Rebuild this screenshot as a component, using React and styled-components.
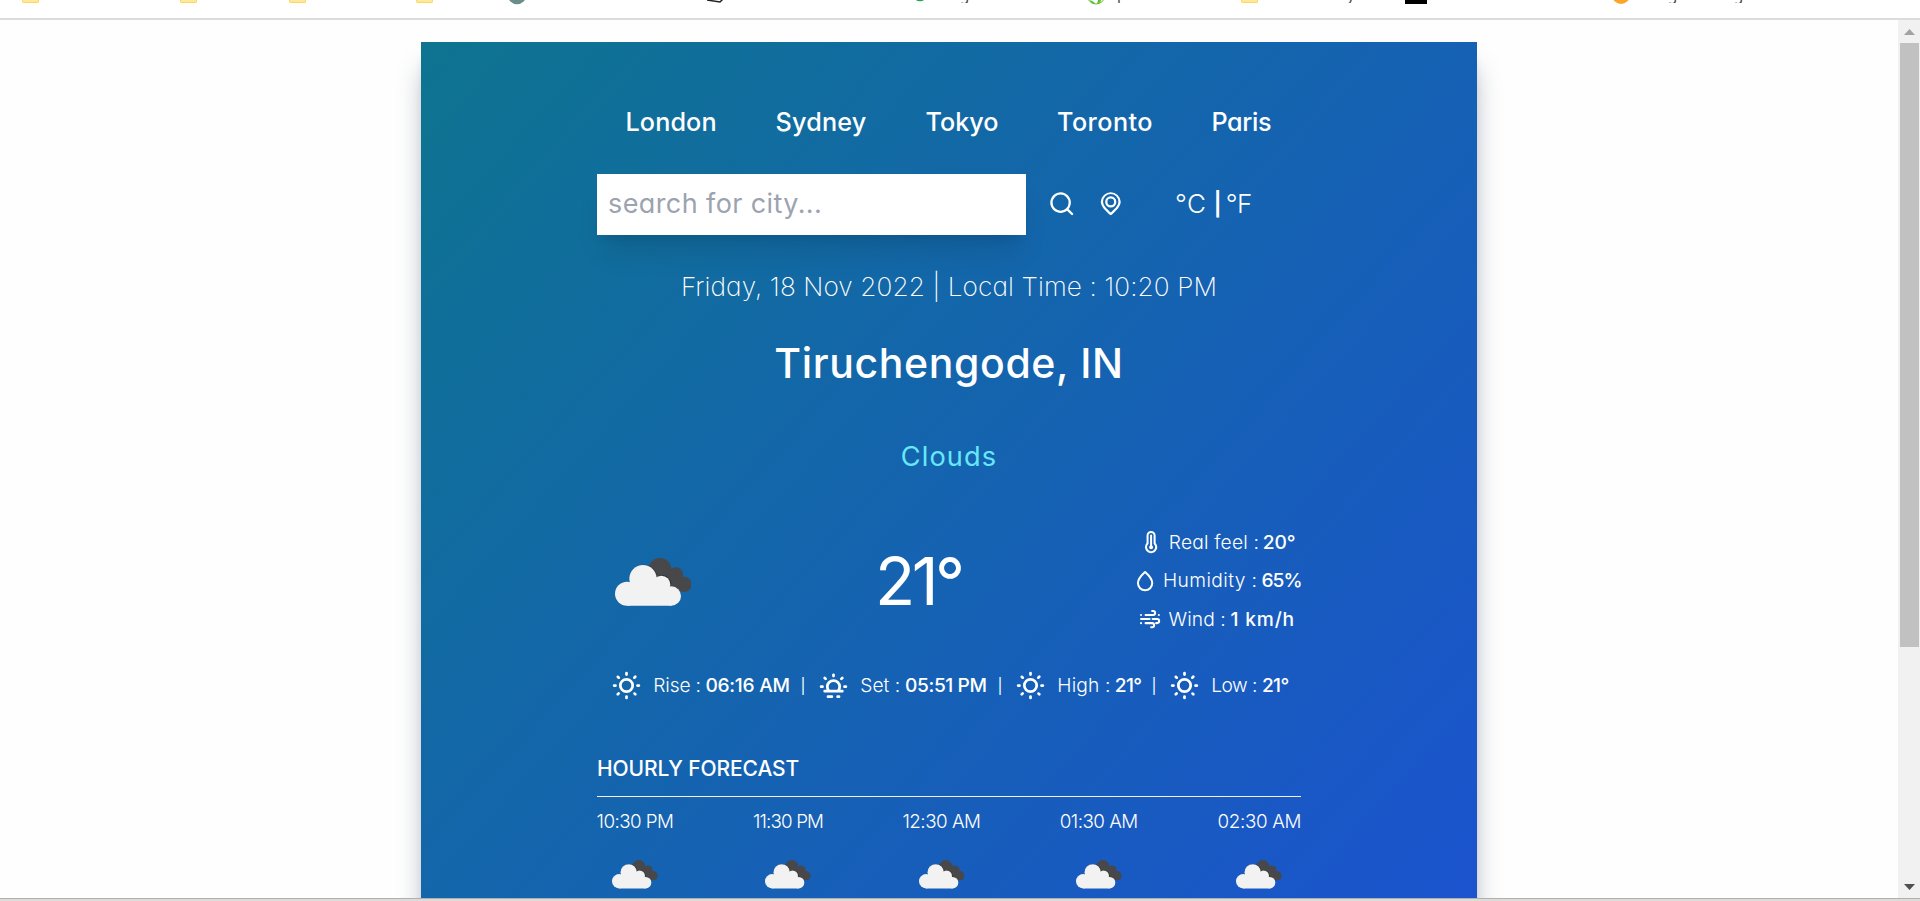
import React from 'react';
import styled, { createGlobalStyle } from 'styled-components';

const GlobalStyle = createGlobalStyle`
  *, *::before, *::after { box-sizing: border-box; }
  body {
    margin: 0;
    background: #fefefe;
    color: #fff;
    font-family: Inter, 'Open Sans', sans-serif;
    font-feature-settings: 'cv11';
    overflow: hidden;
  }
`;

const Window = styled.div`
  display: flex;
  flex-direction: column;
  height: 901px;
  overflow: hidden;
`;

/* ---- browser chrome ---- */

const BookmarksBar = styled.div`
  display: flex;
  align-items: flex-start;
  flex: none;
  height: 20px;
  border-bottom: 2px solid #dcdcdc;
  background: #fff;
`;

const Folder = styled.span`
  width: 17px;
  height: 3px;
  margin-left: ${(p) => p.$gap}px;
  background: #ffe89a;
  border: 1px solid #fbd75f;
  border-top: 0;
  border-radius: 0 0 2px 2px;
`;

const Favicon = styled.svg`
  display: block;
  flex: none;
  width: ${(p) => p.$w}px;
  height: 5px;
  margin-left: ${(p) => p.$gap}px;
`;

const Descender = styled.span`
  height: 3px;
  width: 9px;
  margin-left: ${(p) => p.$gap}px;
  overflow: hidden;
  color: #444;
  font: 15px/18px 'Noto Sans', sans-serif;
  display: flex;
  align-items: flex-end;
`;

const Viewport = styled.div`
  display: flex;
  flex: none;
  height: 878px;
  overflow: hidden;
`;

const Page = styled.main`
  flex: 1;
  padding: 22px 421px 0;
  overflow: hidden;
`;

const Scrollbar = styled.div`
  display: flex;
  flex-direction: column;
  align-items: center;
  width: 22px;
  padding: 9px 0 8px;
  background: #f1f1f1;
`;

const Arrow = styled.svg`
  display: block;
  flex: none;
  width: 11px;
  height: 6px;
`;

const Thumb = styled.div`
  width: 19px;
  height: 604px;
  margin: 8px 0 auto;
  background: #c1c1c1;
`;

const BottomEdge = styled.div`
  flex: none;
  height: 3px;
  border-top: 1px solid #b0b0b0;
  background: #dcdbda;
`;

/* ---- weather card ---- */

const Card = styled.section`
  width: 1056px;
  height: 1171px;
  padding: 50px 176px 22px;
  background: linear-gradient(to bottom right, #0e7490, #1d4ed8);
  box-shadow: 0 22px 27.5px -5.5px #9ca3af, 0 8.8px 11px -6.6px #9ca3af;
`;

const Text = styled.span`
  font-size: ${(p) => p.$size}px;
  font-weight: ${(p) => p.$weight || 400};
  letter-spacing: ${(p) => p.$track || 0}px;
  color: ${(p) => p.$color || 'inherit'};
  line-height: 1;
  white-space: pre;
`;

const Cities = styled.nav`
  display: grid;
  grid-template-columns: 150px 150px 131.5px 154.5px 1fr;
  align-items: center;
  height: 61px;
  padding-left: 28.5px;
`;

const SearchRow = styled.div`
  display: flex;
  align-items: center;
  height: 61px;
  margin-top: 21px;
`;

const SearchBox = styled.div`
  display: flex;
  align-items: center;
  width: 429px;
  height: 61px;
  padding: 0 0 2px 11px;
  background: #fff;
  box-shadow: 0 22px 27.5px -5.5px rgba(0, 0, 0, 0.1), 0 8.8px 11px -6.6px rgba(0, 0, 0, 0.1);
`;

const Tools = styled.div`
  display: flex;
  gap: 22px;
  margin: 0 0 1px 21.7px;
`;

const Units = styled.div`
  display: grid;
  grid-template-columns: 38.5px 12.2px auto;
  align-items: center;
  margin: 0 0 1px 50.3px;
`;

const Line = styled.div`
  display: flex;
  align-items: center;
  justify-content: center;
  height: ${(p) => p.$h}px;
  margin-top: ${(p) => p.$mt}px;
`;

const Current = styled.div`
  display: grid;
  grid-template-columns: 278px 257px 1fr;
  align-items: center;
  height: 115.5px;
  margin-top: 50px;
`;

const CloudSvg = styled.svg`
  display: block;
  width: ${(p) => p.$w}px;
  height: auto;
  margin: ${(p) => p.$margin || 0};
`;

const Details = styled.div`
  display: flex;
  flex-direction: column;
`;

const DetailRow = styled.div`
  display: grid;
  grid-template-columns: 30.2px ${(p) => p.$label}px auto;
  align-items: center;
  height: 38.5px;
  padding-left: ${(p) => p.$indent}px;
`;

const SunRow = styled.div`
  display: grid;
  grid-template-columns: 207px 197px 154px 1fr;
  height: 44px;
  margin-top: 25px;
  padding-left: 13px;
`;

const SunItem = styled.div`
  display: grid;
  grid-template-columns: 43.3px ${(p) => p.$label}px 1fr auto;
  align-items: center;
`;

const Divider = styled(Text)`
  margin-right: 11.5px;
`;

const SectionTitle = styled.header`
  display: flex;
  align-items: flex-start;
  height: 45px;
  margin-top: 44.5px;
  padding-top: 6px;
  border-bottom: 1px solid #f3f1ea;
`;

const Hours = styled.div`
  display: flex;
  justify-content: space-between;
`;

const Hour = styled.div`
  display: flex;
  flex-direction: column;
  align-items: center;
  width: ${(p) => p.$w}px;
  padding-top: 16px;
`;

const Icon = styled.svg`
  display: block;
  flex: none;
  width: ${(p) => p.$s}px;
  height: ${(p) => p.$s}px;
  fill: currentColor;
`;

const stroke = { fill: 'none', stroke: 'currentColor', strokeWidth: 2, strokeLinecap: 'round', strokeLinejoin: 'round' };

const SearchIcon = () => (
  <Icon $s={27.5} viewBox="0 0 24 24">
    <path d="M21.71,20.29,18,16.61A9,9,0,1,0,16.61,18l3.68,3.68a1,1,0,0,0,1.42,0A1,1,0,0,0,21.71,20.29ZM11,18a7,7,0,1,1,7-7A7,7,0,0,1,11,18Z" />
  </Icon>
);

const PinIcon = () => (
  <Icon $s={27.5} viewBox="0 0 24 24">
    <path d="M12,2A9,9,0,0,0,3.3,10.2c0,5.2,7.7,11,8,11.5a1,1,0,0,0,1.4,0c.3-.5,8-6.3,8-11.5A9,9,0,0,0,12,2Zm0,17.6c-1.9-1.8-6.7-5.7-6.7-9.4a6.7,6.7,0,0,1,13.4,0C18.700,13.900,13.900,17.800,12,19.600ZM12,5.500a4.900,4.900,0,1,0,4.900,4.900A4.900,4.900,0,0,0,12,5.500Zm0,7.800a2.900,2.900,0,1,1,2.900-2.900A2.900,2.900,0,0,1,12,13.300Z" />
  </Icon>
);

const ThermometerIcon = () => (
  <Icon $s={24.2} viewBox="0 0 24 24">
    <path d="M13,15.28V5.500a1,1,0,0,0-2,0v9.780A2,2,0,0,0,10,17a2,2,0,0,0,4,0A2,2,0,0,0,13,15.280ZM16.500,13V5.500a4.500,4.500,0,0,0-9,0V13a6,6,0,0,0,3.210,9.830A7,7,0,0,0,12,23,6,6,0,0,0,16.500,13Zm-2,7.070a4,4,0,0,1-6.420-2.200,4,4,0,0,1,1.100-3.760,1,1,0,0,0,.3-.71V5.500a2.500,2.500,0,0,1,5,0v7.940a1,1,0,0,0,.3.710,4,4,0,0,1-.28,6Z" />
  </Icon>
);

const DropIcon = () => (
  <Icon $s={24.2} viewBox="0 0 24 24">
    <path {...stroke} d="M12 3C9.500 5.300 4.900 9.300 4.900 14a7.100 7.100 0 0 0 14.200 0C19.100 9.300 14.500 5.300 12 3Z" />
  </Icon>
);

const WindIcon = () => (
  <Icon $s={24.2} viewBox="0 0 24 24">
    <path {...stroke} d="M7.500 8h7.500a2 2 0 0 0 0-4h-1M3 12h8.500M14.500 12h4.500a2 2 0 0 1 0 4h-1M7.500 16h6.500a2 2 0 0 1 0 4h-1M3 8h.01M3 16h.01M20.700 8h.01" />
  </Icon>
);

const SunIcon = () => (
  <Icon $s={33} viewBox="0 0 24 24">
    <path d="M5.64,17l-.71.71a1,1,0,0,0,0,1.41,1,1,0,0,0,1.41,0l.71-.71A1,1,0,0,0,5.64,17ZM5,12a1,1,0,0,0-1-1H3a1,1,0,0,0,0,2H4A1,1,0,0,0,5,12Zm7-7a1,1,0,0,0,1-1V3a1,1,0,0,0-2,0V4A1,1,0,0,0,12,5ZM5.64,7.05a1,1,0,0,0,.7.29,1,1,0,0,0,.71-.29,1,1,0,0,0,0-1.41l-.71-.71A1,1,0,0,0,4.93,6.340Zm12,.29a1,1,0,0,0,.7-.29l.71-.71a1,1,0,1,0-1.410-1.410L17,5.640a1,1,0,0,0,0,1.410A1,1,0,0,0,17.660,7.340ZM21,11H20a1,1,0,0,0,0,2h1a1,1,0,0,0,0-2Zm-9,8a1,1,0,0,0-1,1v1a1,1,0,0,0,2,0V20A1,1,0,0,0,12,19ZM18.360,17A1,1,0,0,0,17,18.360l.71.71a1,1,0,0,0,1.410,0,1,1,0,0,0,0-1.410ZM12,6.500A5.500,5.500,0,1,0,17.500,12,5.510,5.510,0,0,0,12,6.500Zm0,9A3.500,3.500,0,1,1,15.500,12,3.500,3.500,0,0,1,12,15.500Z" />
  </Icon>
);

const SunsetIcon = () => (
  <Icon $s={33} viewBox="0 0 24 24">
    <path {...stroke} d="M5.600 16.100h12.800M8.600 15.900A4.500 4.500 0 1 1 15.400 15.900M12 4.200v.9M3 12.900h1M20 12.900h1M5.600 6.500l.7.7M18.400 6.500l-.7.7M8 20.100h2.800M15 20.100h1" />
  </Icon>
);

const Cloud = ({ width, margin }) => (
  <CloudSvg $w={width} $margin={margin} viewBox="0 0 230 145">
    <g fill="#48484a">
      <circle cx="135" cy="34" r="34" />
      <circle cx="182" cy="50" r="22" />
      <circle cx="207" cy="79" r="23" />
      <path d="M120 40L180 40L200 100L150 100Z" />
    </g>
    <g fill="#222" opacity="0.55">
      <circle cx="86" cy="61" r="41" />
      <circle cx="142" cy="78" r="27" />
    </g>
    <g fill="#f2f2f2">
      <circle cx="36" cy="107" r="36" />
      <circle cx="84" cy="62" r="41" />
      <circle cx="139" cy="80" r="27" />
      <circle cx="169" cy="114" r="29" />
      <path d="M36 143V85L70 70H145L169 90V143Z" />
    </g>
  </CloudSvg>
);

const cities = [
  ['London', 0.1],
  ['Sydney', 0.2],
  ['Tokyo', 0],
  ['Toronto', 0.45],
  ['Paris', -0.4],
];

const details = [
  { Glyph: ThermometerIcon, indent: 6.6, w: 94, label: 'Real feel :', lt: 0.2, value: '20°', vt: -0.1 },
  { Glyph: DropIcon, indent: 0.8, w: 98.4, label: 'Humidity :', lt: 0.4, value: '65%', vt: -0.95 },
  { Glyph: WindIcon, indent: 6.4, w: 62, label: 'Wind :', lt: 0.1, value: '1 km/h', vt: 0.8 },
];

const sun = [
  { Glyph: SunIcon, w: 52.2, label: 'Rise :', lt: -0.15, value: '06:16 AM', vt: -0.3 },
  { Glyph: SunsetIcon, w: 44.8, label: 'Set :', lt: 0, value: '05:51 PM', vt: -0.42 },
  { Glyph: SunIcon, w: 57.4, label: 'High :', lt: 0.15, value: '21°', vt: -0.6 },
  { Glyph: SunIcon, w: 50.6, label: 'Low :', lt: -0.55, value: '21°', vt: -0.6 },
];

const hours = [
  ['10:30 PM', 76, -0.55],
  ['11:30 PM', 69, -0.88],
  ['12:30 AM', 76.6, -0.49],
  ['01:30 AM', 76.6, -0.52],
  ['02:30 AM', 83.4, -0.33],
];

const Bookmarks = () => (
  <BookmarksBar>
    <Folder $gap={22} />
    <Folder $gap={141} />
    <Folder $gap={92} />
    <Folder $gap={110} />
    <Favicon $gap={75} $w={18} viewBox="0 0 18 5"><circle cx="9" cy="-5" r="9.300" fill="#6b8e8a" /></Favicon>
    <Favicon $gap={181} $w={18} viewBox="0 0 18 5"><path d="M0 0L13 2L17 -2" fill="none" stroke="#222" strokeWidth="1.500" /></Favicon>
    <Favicon $gap={189} $w={12} viewBox="0 0 12 5"><circle cx="6" cy="-6" r="7.300" fill="#1fa34a" /></Favicon>
    <Descender $gap={34}>g</Descender>
    <Favicon $gap={118} $w={18} viewBox="0 0 18 5"><circle cx="9" cy="-5" r="9" fill="#fff" stroke="#5cc22d" /><path d="M3 0Q8 2 8 4Q3 3 3 0ZM11 0H14Q14 3 10 4Z" fill="#5cc22d" /></Favicon>
    <Descender $gap={12}>p</Descender>
    <Folder $gap={115} />
    <Descender $gap={89}>y</Descender>
    <Favicon $gap={49} $w={22} viewBox="0 0 22 5"><path d="M0 0H22V4H0Z" /></Favicon>
    <Favicon $gap={185} $w={18} viewBox="0 0 18 5"><circle cx="9" cy="-5" r="9" fill="#fba62b" /></Favicon>
    <Descender $gap={38}>g</Descender>
    <Descender $gap={57}>g</Descender>
  </BookmarksBar>
);

export default function App() {
  return (
    <Window>
      <GlobalStyle />
      <Bookmarks />
      <Viewport>
        <Page>
          <Card>
            <Cities>
              {cities.map(([name, track]) => (
                <Text key={name} $size={25.2} $weight={540} $track={track}>{name}</Text>
              ))}
            </Cities>

            <SearchRow>
              <SearchBox>
                <Text $size={27} $track={0.4} $color="#9ca3af">search for city...</Text>
              </SearchBox>
              <Tools>
                <SearchIcon />
                <PinIcon />
              </Tools>
              <Units>
                <Text $size={26} $weight={300} $track={0.6}>°C</Text>
                <Text $size={23} $weight={600}>|</Text>
                <Text $size={26} $weight={300} $track={-0.6}>°F</Text>
              </Units>
            </SearchRow>

            <Line $h={44} $mt={30.5}>
              <Text $size={26.2} $weight={200} $track={0.1}>Friday, 18 Nov 2022 | Local Time : 10:20 PM</Text>
            </Line>
            <Line $h={60} $mt={24}>
              <Text $size={41} $weight={540} $track={0.62}>Tiruchengode, IN</Text>
            </Line>
            <Line $h={32} $mt={47.5}>
              <Text $size={27.2} $track={1.1} $color="#67e8f9">Clouds</Text>
            </Line>

            <Current>
              <Cloud width={76.7} margin="3px 0 0 17.500px" />
              <Text $size={66} $weight={440} $track={-3.5}>21°</Text>
              <Details>
                {details.map(({ Glyph, indent, w, label, lt, value, vt }) => (
                  <DetailRow key={label} $indent={indent} $label={w}>
                    <Glyph />
                    <Text $size={19.2} $weight={300} $track={lt}>{label}</Text>
                    <Text $size={19.2} $weight={540} $track={vt}>{value}</Text>
                  </DetailRow>
                ))}
              </Details>
            </Current>

            <SunRow>
              {sun.map(({ Glyph, w, label, lt, value, vt }, i) => (
                <SunItem key={label} $label={w}>
                  <Glyph />
                  <Text $size={19.2} $weight={300} $track={lt}>{label}</Text>
                  <Text $size={19.2} $weight={540} $track={vt}>{value}</Text>
                  {i < 3 && <Divider $size={15}>|</Divider>}
                </SunItem>
              ))}
            </SunRow>

            <SectionTitle>
              <Text $size={21} $weight={540} $track={-0.1}>HOURLY FORECAST</Text>
            </SectionTitle>
            <Hours>
              {hours.map(([time, w, track]) => (
                <Hour key={time} $w={w}>
                  <Text $size={18.8} $weight={320} $track={track}>{time}</Text>
                  <Cloud width={45.7} margin="28.500px 0 0" />
                </Hour>
              ))}
            </Hours>
          </Card>
        </Page>
        <Scrollbar>
          <Arrow viewBox="0 0 11 6"><path d="M5.500 0L11 6H0Z" fill="#a3a3a3" /></Arrow>
          <Thumb />
          <Arrow viewBox="0 0 11 6"><path d="M0 0H11L5.500 6Z" fill="#505050" /></Arrow>
        </Scrollbar>
      </Viewport>
      <BottomEdge />
    </Window>
  );
}
